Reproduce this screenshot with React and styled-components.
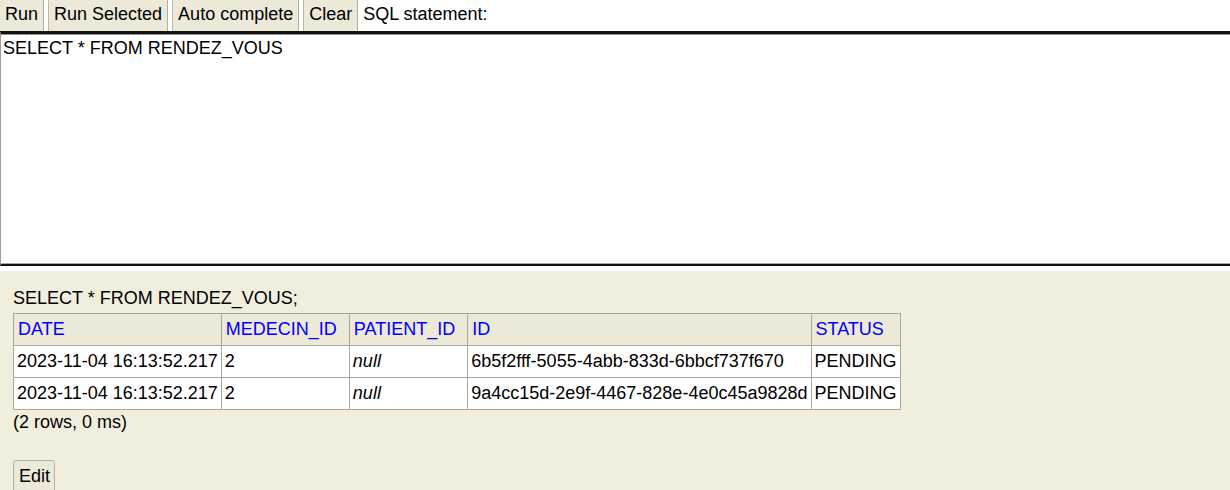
import React from 'react';
import styled, { createGlobalStyle } from 'styled-components';

const GlobalStyle = createGlobalStyle`
  html, body {
    margin: 0;
    padding: 0;
    background: #ffffff;
    font-family: "Liberation Sans", Arial, sans-serif;
    font-size: 18px;
    color: #000;
    overflow: hidden;
  }
`;

const Page = styled.div`
  display: flex;
  flex-direction: column;
  width: 1230px;
  height: 490px;
  overflow: hidden;

  & > * {
    flex-shrink: 0;
  }
`;

const Toolbar = styled.div`
  display: flex;
  align-items: stretch;
  gap: 4px;
  height: 31px;
  margin-left: -1px;
`;

const ToolButton = styled.div`
  display: flex;
  align-items: center;
  padding: 0 5px 2px 5px;
  background: #ece9d8;
  border-left: 1px solid #bdb9aa;
  border-right: 1px solid #b3af9f;
  box-sizing: border-box;
  height: 31px;
  white-space: nowrap;
`;

const Label = styled.div`
  display: flex;
  align-items: center;
  padding: 0 0 2px 1px;
  white-space: nowrap;
`;

const Editor = styled.div`
  height: 235px;
  box-sizing: border-box;
  background: #fff;
  border-top: 3px solid #141414;
  border-bottom: 2px solid #141414;
  border-left: 1px solid #9c9c9c;
  box-shadow: inset 0 1px 0 #8c8c8c, inset 0 -1px 0 #a8a8a8;
  padding: 4px 2px;
  line-height: 21px;
`;

const Gap = styled.div`
  height: 5px;
  background: #fff;
`;

const Result = styled.div`
  flex: 1 0 auto;
  background: #f2eede;
  padding: 17px 13px 0;
`;

const Statement = styled.div`
  line-height: 21px;
  margin-bottom: 4px;
`;

const Table = styled.table`
  border-collapse: collapse;
  font-size: 18px;
`;

const Th = styled.th`
  background: #ece9d8;
  color: #0000ff;
  font-weight: normal;
  text-align: left;
  border: 1px solid #aca899;
  padding: 5px 12px 5px 4px;
  line-height: 21px;
`;

const Td = styled.td`
  background: #fff;
  border: 1px solid #aca899;
  padding: 5px 3px 5px 3px;
  line-height: 21px;
  white-space: nowrap;
  font-style: ${(p) => (p.$null ? 'italic' : 'normal')};
`;

const Summary = styled.div`
  line-height: 21px;
  margin-top: 2px;
`;

const EditButton = styled.div`
  display: inline-flex;
  align-items: center;
  margin-top: 27px;
  padding: 5px 4px 6px 5px;
  background: #ece9d8;
  border: 1px solid #b3b0a3;
  border-radius: 3px;
  line-height: 21px;
`;

const columns = ['DATE', 'MEDECIN_ID', 'PATIENT_ID', 'ID', 'STATUS'];

const rows = [
  ['2023-11-04 16:13:52.217', '2', null, '6b5f2fff-5055-4abb-833d-6bbcf737f670', 'PENDING'],
  ['2023-11-04 16:13:52.217', '2', null, '9a4cc15d-2e9f-4467-828e-4e0c45a9828d', 'PENDING'],
];

export default function App() {
  return (
    <Page>
      <GlobalStyle />
      <Toolbar>
        <ToolButton>Run</ToolButton>
        <ToolButton>Run Selected</ToolButton>
        <ToolButton>Auto complete</ToolButton>
        <ToolButton>Clear</ToolButton>
        <Label>SQL statement:</Label>
      </Toolbar>
      <Editor>SELECT * FROM RENDEZ_VOUS</Editor>
      <Gap />
      <Result>
        <Statement>SELECT * FROM RENDEZ_VOUS;</Statement>
        <Table>
          <thead>
            <tr>
              {columns.map((c) => (
                <Th key={c}>{c}</Th>
              ))}
            </tr>
          </thead>
          <tbody>
            {rows.map((r, i) => (
              <tr key={i}>
                {r.map((v, j) => (
                  <Td key={j} $null={v === null}>
                    {v === null ? 'null' : v}
                  </Td>
                ))}
              </tr>
            ))}
          </tbody>
        </Table>
        <Summary>(2 rows, 0 ms)</Summary>
        <EditButton>Edit</EditButton>
      </Result>
    </Page>
  );
}
